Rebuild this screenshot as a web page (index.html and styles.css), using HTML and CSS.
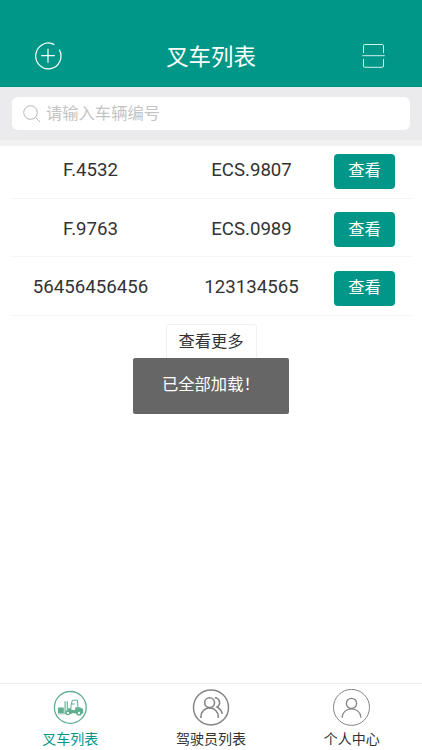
FILE: index.html
```html
<!DOCTYPE html>
<html lang="zh-CN">
  <head>
    <meta charset="UTF-8" />
    <meta name="viewport" content="width=device-width, initial-scale=1" />
    <title>叉车列表</title>
    <link rel="stylesheet" href="styles.css">
  </head>
  <body>
    <header class="header">
      <svg class="icon-add" viewBox="0 0 28 28">
        <path d="M20.3 2.6A12.6 12.9 0 1 0 25.3 7.6M14 6.7v14M7.2 13.7h13.6" />
      </svg>
      <h1>叉车列表</h1>
      <svg class="icon-scan" viewBox="0 0 24 26">
        <path d="M1.5 10V2.8Q1.5 1.5 2.8 1.5H20.2Q21.5 1.5 21.5 2.8V10M1.5 16V23Q1.5 24.3 2.8 24.3H20.2Q21.5 24.3 21.5 23V16M.3 12.7H22.8" />
      </svg>
    </header>

    <div class="search">
      <div class="search-box">
        <svg class="icon-search" viewBox="0 0 18 18">
          <circle cx="7.5" cy="7.5" r="6.8" />
          <path d="M12.4 12.4l4.7 4.7" />
        </svg>
        <span>请输入车辆编号</span>
      </div>
    </div>

    <main class="content">
      <div class="row">
        <span class="name">F.4532</span>
        <span class="code">ECS.9807</span>
        <button class="btn">查看</button>
      </div>
      <div class="row">
        <span class="name">F.9763</span>
        <span class="code">ECS.0989</span>
        <button class="btn">查看</button>
      </div>
      <div class="row">
        <span class="name">56456456456</span>
        <span class="code">123134565</span>
        <button class="btn">查看</button>
      </div>
      <button class="more">查看更多</button>
    </main>

    <div class="toast">已全部加载！</div>

    <nav class="tabbar">
      <a class="tab active">
        <svg viewBox="0 0 38 38">
          <circle cx="19.3" cy="18.4" r="15.9" fill="none" stroke="#5fae8e" stroke-width="1.3" />
          <g fill="#5fae8e">
            <path d="M7 18.6h5.8v5.4H7zM13.5 12.3h1.1v12h-1.1zM15.7 12.3h1.1v12h-1.1zM7 24.4h7.5v.8H7z" />
            <path d="M17 19.3h2.6l1.2 1.8h3.4v-2.8h4.2l3.2 1.2.6 1.4v3.3l-1.5.8h-5.5l-1-.8h-3l-1 .8H14.5v-2.3l1-1.2H17z" />
            <circle cx="16.9" cy="23.9" r="2.4" />
            <circle cx="28" cy="23.9" r="2.6" />
          </g>
          <path d="M20 19.8v-3.5l1.4-5.1h5l.6 7.2M20.5 15h3.2" fill="none" stroke="#5fae8e" />
          <g fill="#fff">
            <circle cx="16.9" cy="23.9" r="1.1" />
            <circle cx="28" cy="23.9" r="1.2" />
          </g>
        </svg>
        <span>叉车列表</span>
      </a>
      <a class="tab">
        <svg viewBox="0 0 38 38" fill="none" stroke="#858585" stroke-width="1.6">
          <circle cx="19" cy="18.4" r="17.5" stroke-width="1.5" />
          <circle cx="17.6" cy="13.7" r="4.9" />
          <path d="M8.9 28.9v-1.3a8.7 8.7 0 0 1 17.4 0v1.3" />
          <path d="M22.8 8.8a4.9 4.9 0 0 1 2.2 9.2q4.6 2.4 5.2 6.8" />
        </svg>
        <span>驾驶员列表</span>
      </a>
      <a class="tab">
        <svg viewBox="0 0 38 38" fill="none" stroke="#858585" stroke-width="1.3">
          <circle cx="18.5" cy="18.4" r="18" stroke-width="1" />
          <circle cx="18.5" cy="14.4" r="5.1" />
          <path d="M9.1 28.8v-.4a9.4 8.5 0 0 1 18.8 0v.4" />
        </svg>
        <span>个人中心</span>
      </a>
    </nav>
  </body>
</html>
```
FILE: styles.css
```css
* {
  box-sizing: border-box;
}
body {
  margin: 0;
  height: 750px;
  display: flex;
  flex-direction: column;
  background-color: #fff;
  color: #333;
  font-family: Roboto, "Noto Sans CJK SC", sans-serif;
  overflow: hidden;
}
svg {
  display: block;
  flex: none;
}
button {
  font-family: inherit;
}
.header {
  height: 87px;
  padding: 25px 36px 0 34px;
  display: flex;
  justify-content: space-between;
  align-items: center;
  background-color: #009788;
  color: #fff;
}
.header h1 {
  margin: 0;
  padding: 2px 2px 0 0;
  font-size: 22.4px;
  line-height: 30px;
  font-weight: 400;
}
.icon-add {
  width: 28px;
  height: 28px;
  fill: none;
  stroke: #fff;
  stroke-width: 1.2;
}
.icon-scan {
  width: 24px;
  height: 26px;
  fill: none;
  stroke: #d5f0ed;
  stroke-width: 1;
}
.search {
  height: 59px;
  padding: 10px 12px 0;
  background-color: #ebebed;
  border-bottom: 6px solid #f1f1f1;
}
.search-box {
  height: 33px;
  padding-left: 11px;
  display: flex;
  align-items: center;
  gap: 5px;
  background-color: #fff;
  border-radius: 6px;
  color: #c4c4c4;
  font-size: 16.3px;
  line-height: 24px;
}
.icon-search {
  width: 18px;
  height: 18px;
  fill: none;
  stroke: #b5b5b5;
  stroke-width: 1;
}
.content {
  flex: 1;
  padding: 0 10px;
  display: flex;
  flex-direction: column;
}
.row {
  height: 58.5px;
  padding-top: 5px;
  display: grid;
  grid-template-columns: 161px 161px 1fr;
  align-items: center;
  border-bottom: 1px solid #f5f5f5;
  font-size: 18.67px;
  text-align: center;
}
.row:first-child {
  margin-top: -6px;
}
.row .name,
.row .code {
  padding-bottom: 2px;
}
.btn {
  width: 61px;
  height: 35px;
  margin-left: 2px;
  padding: 0 0 4px;
  border: none;
  border-radius: 4px;
  background-color: #009788;
  color: #fff;
  font-size: 16.3px;
}
.more {
  width: 91px;
  height: 37px;
  margin-top: 8px;
  align-self: center;
  padding: 0 0 4px;
  border: 1px solid #f0f0f0;
  border-radius: 3px;
  background-color: #fff;
  color: #333;
  font-size: 16.3px;
}
/* toast over the list */
.toast {
  position: absolute;
  left: 133px;
  top: 358px;
  width: 156px;
  height: 56px;
  padding-left: 29px;
  border-radius: 2px;
  background-color: #666;
  color: #fff;
  font-size: 16.3px;
  line-height: 53px;
  white-space: nowrap;
}
.tabbar {
  height: 67px;
  display: flex;
  border-top: 1px solid #ececec;
}
.tab {
  flex: 1;
  padding-top: 5px;
  display: flex;
  flex-direction: column;
  align-items: center;
  font-size: 14px;
  line-height: 20px;
}
.tab svg {
  width: 38px;
  height: 38px;
  margin-bottom: 2px;
}
.tab.active {
  color: #009788;
}
```
